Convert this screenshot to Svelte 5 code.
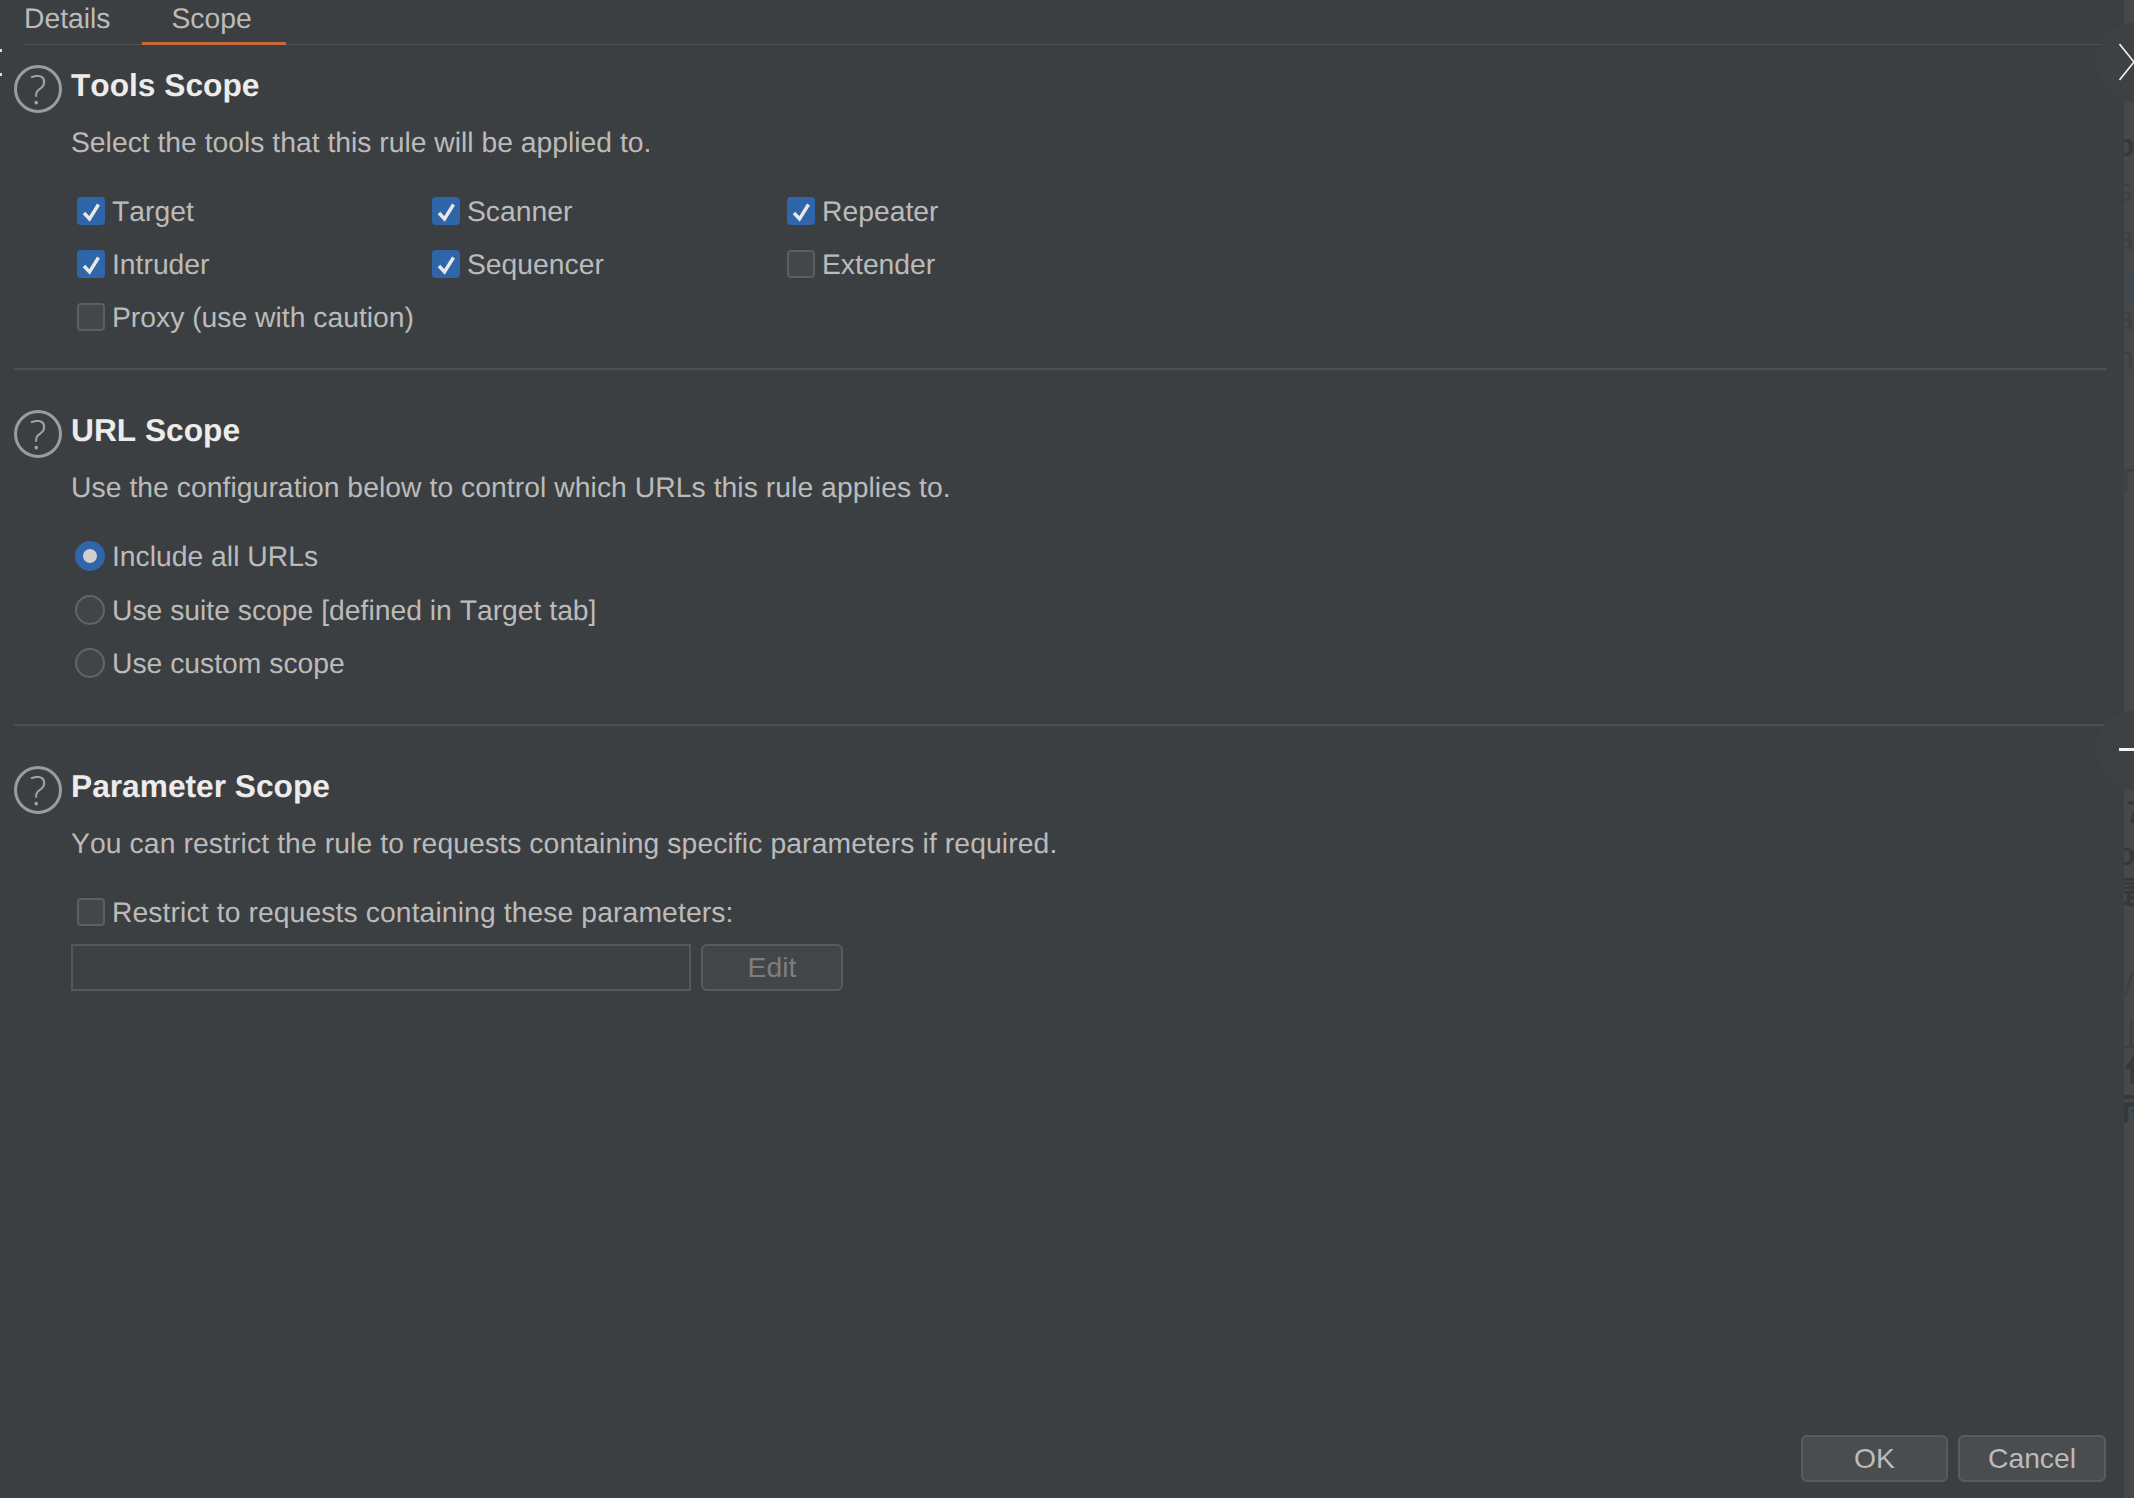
<script>
	const tools = [
		{ label: 'Target', on: true },
		{ label: 'Scanner', on: true },
		{ label: 'Repeater', on: true },
		{ label: 'Intruder', on: true },
		{ label: 'Sequencer', on: true },
		{ label: 'Extender', on: false },
		{ label: 'Proxy (use with caution)', on: false }
	];
	const scopes = [
		{ label: 'Include all URLs', on: true },
		{ label: 'Use suite scope [defined in Target tab]', on: false },
		{ label: 'Use custom scope', on: false }
	];
	// page showing through behind the dialog, cut off by its right edge
	const ghosts = [
		{ t: 'p', y: 127, x: -9, bold: true },
		{ t: 's', y: 172, x: -8 },
		{ t: 'a', y: 220, x: -8 },
		{ t: 'g', y: 263, x: -9, blue: true },
		{ t: 'a', y: 300, x: -8 },
		{ t: 'n', y: 340, x: -8 },
		{ t: 'T', y: 462, x: -8 },
		{ t: '号', y: 749, x: -14 },
		{ t: '7', y: 794, x: 2, bold: true },
		{ t: 'o', y: 836, x: -8, bold: true },
		{ t: '是', y: 875, x: -12, bold: true },
		{ t: '/', y: 967, x: 0 },
		{ t: '上', y: 1018, x: -8 },
		{ t: '任', y: 1052, x: 1, bold: true },
		{ t: '示', y: 1091, x: -14, bold: true }
	];
</script>

{#snippet help()}
	<span class="help">?</span>
{/snippet}

{#snippet check(on)}
	<span class="box" class:on>
		{#if on}
			<svg viewBox="0 0 28 28" width="28" height="28">
				<path d="M7 16 L12.5 22 L21.5 7.5" fill="none" stroke="#e8e8e8" stroke-width="3.4" />
			</svg>
		{/if}
	</span>
{/snippet}

<div class="page">
	<div class="main">
		<div class="tabs">
			<div class="tab">Details</div>
			<div class="tab active">Scope</div>
		</div>

		<section class="section tools">
			{@render help()}
			<div class="body">
				<h2>Tools Scope</h2>
				<p>Select the tools that this rule will be applied to.</p>
				<div class="tool-grid">
					{#each tools as tool}
						<label class="opt">
							{@render check(tool.on)}
							{tool.label}
						</label>
					{/each}
				</div>
			</div>
		</section>

		<section class="section urls">
			{@render help()}
			<div class="body">
				<h2>URL Scope</h2>
				<p class="slight">Use the configuration below to control which URLs this rule applies to.</p>
				<div class="radio-list">
					{#each scopes as scope}
						<label class="opt">
							<span class="radio" class:on={scope.on}></span>
							{scope.label}
						</label>
					{/each}
				</div>
			</div>
		</section>

		<section class="section params">
			{@render help()}
			<div class="body">
				<h2>Parameter Scope</h2>
				<p class="wide">You can restrict the rule to requests containing specific parameters if required.</p>
				<div class="radio-list">
					<label class="opt wide">
						{@render check(false)}
						Restrict to requests containing these parameters:
					</label>
				</div>
				<div class="edit-row">
					<div class="field"></div>
					<button class="btn disabled">Edit</button>
				</div>
			</div>
		</section>

		<div class="footer">
			<button class="btn ok">OK</button>
			<button class="btn cancel">Cancel</button>
		</div>
	</div>

	<div class="strip">
		{#each ghosts as g}
			<span class="ghost" class:bold={g.bold} class:blue={g.blue} style="top: {g.y}px; left: {g.x}px">{g.t}</span>
		{/each}
	</div>

	<div class="halo close"></div>
	<div class="halo min"></div>
	<svg class="close-x" viewBox="0 0 15 38" width="15" height="38">
		<path d="M0.5 1 L15 19 M0.5 37 L15 19" fill="none" stroke="#f4f4f4" stroke-width="1.6" />
	</svg>
	<div class="min-bar"></div>
	<i class="dot one"></i>
	<i class="dot two"></i>
</div>

<style>
	:global(body) {
		margin: 0;
		background: #3c3f41;
	}

	.page {
		position: relative;
		display: flex;
		width: 2134px;
		height: 1498px;
		overflow: hidden;
		background: #3c3f41;
		color: #bbbbbb;
		font-family: 'Liberation Sans', Arial, 'Noto Sans CJK SC', sans-serif;
		font-size: 28.3px;
		font-kerning: none;
		text-rendering: geometricPrecision;
	}

	.main {
		flex: 1;
		display: flex;
		flex-direction: column;
		min-width: 0;
	}

	.strip {
		position: relative;
		width: 10px;
		background: #46494b;
		overflow: hidden;
	}

	.ghost {
		position: absolute;
		white-space: nowrap;
		font-size: 32px;
		line-height: 36px;
		color: #3d4042;
	}

	.ghost.bold {
		font-weight: 700;
		color: #36393b;
	}

	.ghost.blue {
		color: #3d4a55;
	}

	.tabs {
		display: flex;
		height: 45px;
		margin: 0 24px;
		box-sizing: border-box;
		border-bottom: 1px solid #515456;
		line-height: 36px;
	}

	.tab {
		height: 45px;
		box-sizing: border-box;
	}

	.tab.active {
		margin-left: 31px;
		width: 144px;
		padding-left: 30px;
		border-bottom: 3px solid #c8693c;
	}

	.section {
		display: flex;
		margin: 0 17px 0 14px;
		box-sizing: border-box;
		border-bottom: 2px solid #4d5052;
	}

	.tools {
		height: 325px;
		padding-top: 20px;
	}

	.urls {
		height: 356px;
		padding-top: 40px;
	}

	.params {
		border-bottom: none;
		padding-top: 40px;
	}

	.help {
		flex: none;
		width: 48px;
		height: 48px;
		box-sizing: border-box;
		border: 3px solid #9a9c9e;
		border-radius: 50%;
		text-align: center;
		font-family: 'Open Sans', 'Liberation Sans', sans-serif;
		font-size: 40px;
		line-height: 42px;
		font-weight: 300;
		color: #a8aaac;
	}

	.body {
		margin-left: 9px;
		flex: 1;
	}

	h2 {
		margin: -1px 0 1px;
		font-size: 31.7px;
		line-height: 42px;
		font-weight: 700;
		color: #ececec;
	}

	p {
		margin: 15px 0 0;
		line-height: 42px;
	}

	p.slight {
		letter-spacing: 0.05px;
	}

	.wide {
		letter-spacing: 0.1px;
	}

	.tool-grid {
		display: grid;
		grid-template-columns: repeat(3, 355px);
		grid-auto-rows: 53.3px;
		margin: 21px 0 0 6px;
	}

	.radio-list {
		margin: 21.5px 0 0 6px;
	}

	.radio-list .opt {
		height: 53.4px;
	}

	.opt {
		display: flex;
		align-items: center;
		gap: 7px;
		line-height: 36px;
	}

	.box {
		flex: none;
		width: 28px;
		height: 28px;
		box-sizing: border-box;
		border: 2px solid #5c5f61;
		border-radius: 4px;
		background: #43464a;
		position: relative;
	}

	.box.on {
		border: none;
		background: #2f65a9;
	}

	.box svg {
		display: block;
	}

	.radio {
		flex: none;
		width: 30px;
		height: 30px;
		margin-left: -2px;
		box-sizing: border-box;
		border: 2px solid #636668;
		border-radius: 50%;
		background: #424547;
	}

	.radio.on {
		border: 8px solid #2f65a9;
		background: #cfcfcf;
	}

	.edit-row {
		display: flex;
		gap: 10px;
		margin-top: 5px;
	}

	.field {
		width: 620px;
		height: 47px;
		box-sizing: border-box;
		border: 2px solid #55585a;
		background: #3e4143;
	}

	.btn {
		height: 47px;
		box-sizing: border-box;
		border: 2px solid #595c5e;
		border-radius: 6px;
		background: #4a4d4f;
		color: #bbbbbb;
		font: inherit;
		padding: 0;
	}

	.btn.disabled {
		width: 142px;
		background: #434648;
		color: #7b7e80;
	}

	.footer {
		display: flex;
		justify-content: flex-end;
		gap: 10px;
		margin: auto 18px 16px 0;
	}

	.ok {
		width: 147px;
	}

	.cancel {
		width: 148px;
	}

	.halo {
		position: absolute;
		width: 80px;
		height: 80px;
		left: 2096px;
		border-radius: 50%;
		background: #3e4143;
	}

	.halo.close {
		top: 22px;
	}

	.halo.min {
		top: 710px;
	}

	.close-x {
		position: absolute;
		left: 2119px;
		top: 43px;
	}

	.min-bar {
		position: absolute;
		left: 2119px;
		top: 748px;
		width: 15px;
		height: 3px;
		background: #f4f4f4;
	}

	.dot {
		position: absolute;
		left: 0;
		width: 2px;
		height: 3px;
		background: #dddddd;
	}

	.dot.one {
		top: 49px;
	}

	.dot.two {
		top: 73px;
	}
</style>
